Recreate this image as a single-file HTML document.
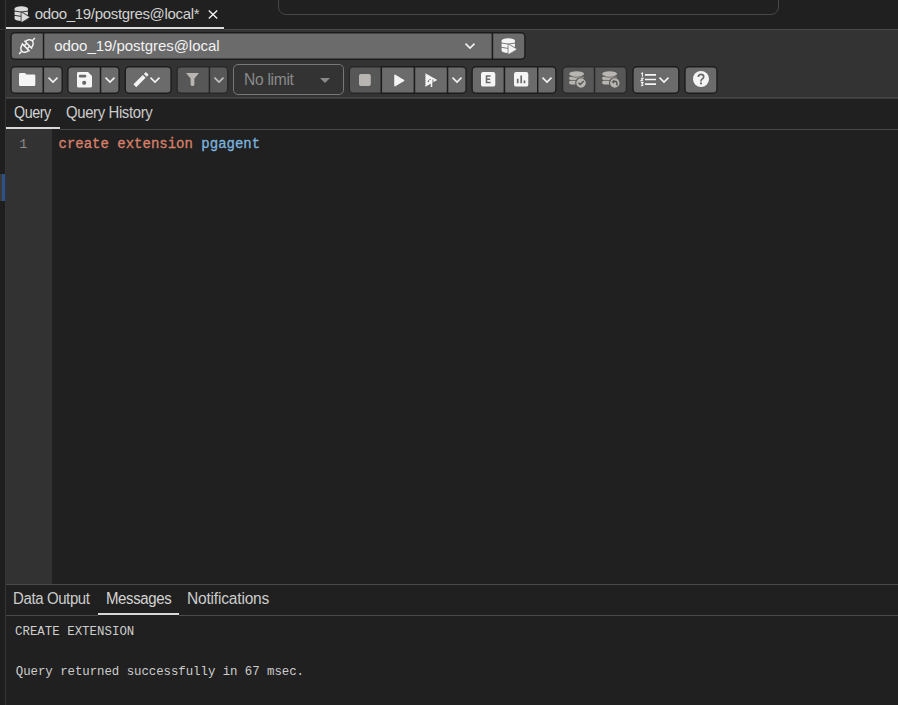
<!DOCTYPE html>
<html><head><meta charset="utf-8">
<style>
*{box-sizing:border-box;margin:0;padding:0}
html,body{width:898px;height:705px;overflow:hidden;background:#202020;font-family:"Liberation Sans",sans-serif;color:#d4d4d4}
.a{position:absolute}
.t{position:absolute;white-space:pre;line-height:1}
svg{position:absolute;overflow:visible}
</style></head><body>
<div class="a" style="left:0px;top:0px;width:5px;height:705px;background:#1e1e1e;"></div>
<div class="a" style="left:5px;top:0px;width:1px;height:705px;background:#353535;"></div>
<div class="a" style="left:0px;top:29px;width:5px;height:1px;background:#353535;"></div>
<div class="a" style="left:0px;top:174px;width:2px;height:27px;background:#3a3a3a;"></div>
<div class="a" style="left:2px;top:174px;width:3px;height:27px;background:#2b5288;"></div>
<div class="a" style="left:6px;top:0px;width:892px;height:29px;background:#202020;"></div>
<div class="a" style="left:278px;top:-12px;width:501px;height:27px;border:1px solid #474747;border-radius:8px"></div>
<svg style="left:14px;top:6px" width="16" height="16" viewBox="0 0 16 16"><path d="M0.6 2.7V12.6A6.65 2.3 0 0 0 13.9 12.6V2.7Z" fill="#dcdcdc"/><ellipse cx="7.25" cy="2.7" rx="6.65" ry="2.5" fill="#dcdcdc"/><path d="M0.2 5.0Q7.25 7.2 14.3 5.0M0.2 9.3Q7.25 11.5 14.3 9.3" fill="none" stroke="#202020" stroke-width="0.9"/><path d="M7.6 6.4L15.4 11.15L7.6 15.9Z" fill="#202020" stroke="#202020" stroke-width="1.8" stroke-linejoin="round"/><path d="M7.6 6.4L15.4 11.15L7.6 15.9Z" fill="#dcdcdc" stroke="#dcdcdc" stroke-width="0.3" stroke-linejoin="round"/></svg>
<div class="t" id="tabtxt" style="left:34.7px;top:6px;font-family:'Liberation Sans';font-size:15.0px;letter-spacing:-0.323px;color:#d2d2d2;">odoo_19/postgres@local*</div>
<svg style="left:208px;top:10px" width="10" height="9" viewBox="0 0 10 9"><path d="M0.8 0.5L9.2 8.5M9.2 0.5L0.8 8.5" stroke="#f0f0f0" stroke-width="1.4"/></svg>
<div class="a" style="left:6px;top:27px;width:218px;height:2px;background:#dcdcdc;"></div>
<div class="a" style="left:224px;top:29px;width:674px;height:1px;background:#4a4a4a;"></div>
<div class="a" style="left:6px;top:29px;width:218px;height:1px;background:#2e2e2e;"></div>
<div class="a" style="left:6px;top:30px;width:892px;height:67px;background:#333333;"></div>
<div class="a" style="left:6px;top:97px;width:892px;height:1px;background:#474747;"></div>
<div class="a" style="left:6px;top:98px;width:892px;height:1px;background:#3a3a3a;"></div>
<svg style="left:0;top:0" width="898" height="705" viewBox="0 0 898 705"><path d="M15.00 32.70H43.60V59.30H15.00A4 4 0 0 1 11.00 55.30V36.70A4 4 0 0 1 15.00 32.70Z" fill="#6b6b6b" stroke="#1c1c1c" stroke-width="1.4"/><path d="M43.60 32.70H492.50V59.30H43.60V32.70Z" fill="#6b6b6b" stroke="#1c1c1c" stroke-width="1.4"/><path d="M492.50 32.70H520.90A4 4 0 0 1 524.90 36.70V55.30A4 4 0 0 1 520.90 59.30H492.50V32.70Z" fill="#6b6b6b" stroke="#1c1c1c" stroke-width="1.4"/></svg>
<div class="t" id="conntxt" style="left:54.2px;top:38px;font-family:'Liberation Sans';font-size:15.0px;letter-spacing:-0.038px;color:#f2f2f2;">odoo_19/postgres@local</div>
<svg style="left:501px;top:38px" width="16" height="16" viewBox="0 0 16 16"><path d="M0.6 2.7V12.6A6.65 2.3 0 0 0 13.9 12.6V2.7Z" fill="#f5f5f5"/><ellipse cx="7.25" cy="2.7" rx="6.65" ry="2.5" fill="#f5f5f5"/><path d="M0.2 5.0Q7.25 7.2 14.3 5.0M0.2 9.3Q7.25 11.5 14.3 9.3" fill="none" stroke="#6b6b6b" stroke-width="0.9"/><path d="M7.6 6.4L15.4 11.15L7.6 15.9Z" fill="#6b6b6b" stroke="#6b6b6b" stroke-width="1.8" stroke-linejoin="round"/><path d="M7.6 6.4L15.4 11.15L7.6 15.9Z" fill="#f5f5f5" stroke="#f5f5f5" stroke-width="0.3" stroke-linejoin="round"/></svg>
<svg style="left:465px;top:42.5px" width="10" height="6" viewBox="0 0 10 6"><path d="M0.5 0.6L5 5.1L9.5 0.6" fill="none" stroke="#f5f5f5" stroke-width="1.5"/></svg>
<svg style="left:18.7px;top:38.05px" width="16" height="16" viewBox="0 0 16 16"><g transform="rotate(-45 8 8) translate(8 8)" fill="none" stroke="#f5f5f5" stroke-width="1.45"><path d="M1.8 -5.5V5.5M-1.8 -5.5V5.5M-1.8 -2H1.8M-1.8 2H1.8"/><path d="M1.8 -4.3A5.5 4.3 0 0 1 1.8 4.3M-1.8 -4.3A5.5 4.3 0 0 0 -1.8 4.3"/><path d="M7.2 0H11.2M-7.2 0H-11.2"/></g></svg>
<svg style="left:0;top:0" width="898" height="705" viewBox="0 0 898 705"><path d="M15.00 66.70H43.40V93.30H15.00A4 4 0 0 1 11.00 89.30V70.70A4 4 0 0 1 15.00 66.70Z" fill="#6b6b6b" stroke="#1c1c1c" stroke-width="1.4"/><path d="M43.40 66.70H58.20A4 4 0 0 1 62.20 70.70V89.30A4 4 0 0 1 58.20 93.30H43.40V66.70Z" fill="#6b6b6b" stroke="#1c1c1c" stroke-width="1.4"/></svg>
<svg style="left:0;top:0" width="898" height="705" viewBox="0 0 898 705"><path d="M71.80 66.70H100.60V93.30H71.80A4 4 0 0 1 67.80 89.30V70.70A4 4 0 0 1 71.80 66.70Z" fill="#6b6b6b" stroke="#1c1c1c" stroke-width="1.4"/><path d="M100.60 66.70H115.10A4 4 0 0 1 119.10 70.70V89.30A4 4 0 0 1 115.10 93.30H100.60V66.70Z" fill="#6b6b6b" stroke="#1c1c1c" stroke-width="1.4"/></svg>
<svg style="left:0;top:0" width="898" height="705" viewBox="0 0 898 705"><path d="M129.30 66.70H167.10A4 4 0 0 1 171.10 70.70V89.30A4 4 0 0 1 167.10 93.30H129.30A4 4 0 0 1 125.30 89.30V70.70A4 4 0 0 1 129.30 66.70Z" fill="#6b6b6b" stroke="#1c1c1c" stroke-width="1.4"/></svg>
<svg style="left:0;top:0" width="898" height="705" viewBox="0 0 898 705"><path d="M181.10 66.70H209.50V93.30H181.10A4 4 0 0 1 177.10 89.30V70.70A4 4 0 0 1 181.10 66.70Z" fill="#575757" stroke="#282828" stroke-width="1.4"/><path d="M209.50 66.70H223.70A4 4 0 0 1 227.70 70.70V89.30A4 4 0 0 1 223.70 93.30H209.50V66.70Z" fill="#575757" stroke="#282828" stroke-width="1.4"/></svg>
<svg style="left:233px;top:64px" width="111" height="31" viewBox="0 0 111 31"><rect x="0.5" y="0.5" width="110" height="30" rx="4.5" fill="none" stroke="#777" stroke-width="1"/></svg>
<div class="t" id="nolimit" style="left:244.0px;top:70.5px;font-family:'Liberation Sans';font-size:16.2px;letter-spacing:-0.3px;color:#8a8a8a;transform:scaleX(0.963);transform-origin:0 0;">No limit</div>
<svg style="left:320px;top:78px" width="10" height="5" viewBox="0 0 10 5"><path d="M0 0H10L5 5Z" fill="#8a8a8a"/></svg>
<svg style="left:0;top:0" width="898" height="705" viewBox="0 0 898 705"><path d="M353.30 66.70H381.40V93.30H353.30A4 4 0 0 1 349.30 89.30V70.70A4 4 0 0 1 353.30 66.70Z" fill="#575757" stroke="#282828" stroke-width="1.4"/><path d="M381.40 66.70H414.50V93.30H381.40V66.70Z" fill="#6b6b6b" stroke="#1c1c1c" stroke-width="1.4"/><path d="M414.50 66.70H447.60V93.30H414.50V66.70Z" fill="#6b6b6b" stroke="#1c1c1c" stroke-width="1.4"/><path d="M447.60 66.70H462.10A4 4 0 0 1 466.10 70.70V89.30A4 4 0 0 1 462.10 93.30H447.60V66.70Z" fill="#6b6b6b" stroke="#1c1c1c" stroke-width="1.4"/></svg>
<svg style="left:0;top:0" width="898" height="705" viewBox="0 0 898 705"><path d="M476.10 66.70H504.50V93.30H476.10A4 4 0 0 1 472.10 89.30V70.70A4 4 0 0 1 476.10 66.70Z" fill="#6b6b6b" stroke="#1c1c1c" stroke-width="1.4"/><path d="M504.50 66.70H537.70V93.30H504.50V66.70Z" fill="#6b6b6b" stroke="#1c1c1c" stroke-width="1.4"/><path d="M537.70 66.70H551.90A4 4 0 0 1 555.90 70.70V89.30A4 4 0 0 1 551.90 93.30H537.70V66.70Z" fill="#6b6b6b" stroke="#1c1c1c" stroke-width="1.4"/></svg>
<svg style="left:0;top:0" width="898" height="705" viewBox="0 0 898 705"><path d="M566.60 66.70H594.60V93.30H566.60A4 4 0 0 1 562.60 89.30V70.70A4 4 0 0 1 566.60 66.70Z" fill="#575757" stroke="#282828" stroke-width="1.4"/><path d="M594.60 66.70H622.50A4 4 0 0 1 626.50 70.70V89.30A4 4 0 0 1 622.50 93.30H594.60V66.70Z" fill="#575757" stroke="#282828" stroke-width="1.4"/></svg>
<svg style="left:0;top:0" width="898" height="705" viewBox="0 0 898 705"><path d="M637.00 66.70H674.80A4 4 0 0 1 678.80 70.70V89.30A4 4 0 0 1 674.80 93.30H637.00A4 4 0 0 1 633.00 89.30V70.70A4 4 0 0 1 637.00 66.70Z" fill="#6b6b6b" stroke="#1c1c1c" stroke-width="1.4"/></svg>
<svg style="left:0;top:0" width="898" height="705" viewBox="0 0 898 705"><path d="M689.00 66.70H713.00A4 4 0 0 1 717.00 70.70V89.30A4 4 0 0 1 713.00 93.30H689.00A4 4 0 0 1 685.00 89.30V70.70A4 4 0 0 1 689.00 66.70Z" fill="#6b6b6b" stroke="#1c1c1c" stroke-width="1.4"/></svg>
<svg style="left:18.7px;top:73px" width="16.3" height="13" viewBox="0 0 16.3 13"><path d="M0 1.2Q0 0 1.2 0H6L7.5 1.5H15.1Q16.3 1.5 16.3 2.7V11.8Q16.3 13 15.1 13H1.2Q0 13 0 11.8Z" fill="#f5f5f5"/></svg>
<svg style="left:48px;top:76.7px" width="10" height="6" viewBox="0 0 10 6"><path d="M0.5 0.6L5 5.1L9.5 0.6" fill="none" stroke="#f5f5f5" stroke-width="1.5"/></svg>
<svg style="left:76.7px;top:71.8px" width="15" height="15.4" viewBox="0 0 15 15.4"><path d="M0 1.5Q0 0 1.5 0H11L15 4V13.9Q15 15.4 13.5 15.4H1.5Q0 15.4 0 13.9Z" fill="#f5f5f5"/><rect x="1.9" y="2.8" width="7.4" height="2.6" rx="1.2" fill="#6b6b6b"/><circle cx="7.2" cy="10.8" r="2.1" fill="#6b6b6b"/></svg>
<svg style="left:105.3px;top:76.6px" width="10" height="6" viewBox="0 0 10 6"><path d="M0.5 0.6L5 5.1L9.5 0.6" fill="none" stroke="#f5f5f5" stroke-width="1.5"/></svg>
<svg style="left:130px;top:68px" width="22" height="22" viewBox="0 0 22 22"><path d="M4.85 17.75L14.2 8.4" stroke="#f5f5f5" stroke-width="3.9"/><path d="M15.3 7.3L17.25 5.35" stroke="#f5f5f5" stroke-width="3.9"/></svg>
<svg style="left:150.3px;top:76.8px" width="10" height="6" viewBox="0 0 10 6"><path d="M0.5 0.6L5 5.1L9.5 0.6" fill="none" stroke="#f5f5f5" stroke-width="1.5"/></svg>
<svg style="left:186.4px;top:73px" width="13" height="13" viewBox="0 0 13 13"><path d="M0.2 0H12.8Q12.9 0.3 12.6 0.6L8.4 5.6V11.2Q8.4 13.1 6.5 13.1Q4.6 13.1 4.6 11.2V5.6L0.4 0.6Q0.1 0.3 0.2 0Z" fill="#b9b6b1"/></svg>
<svg style="left:214px;top:76.5px" width="10" height="6" viewBox="0 0 10 6"><path d="M0.5 0.6L5 5.1L9.5 0.6" fill="none" stroke="#c4c4c4" stroke-width="1.5"/></svg>
<svg style="left:359px;top:74px" width="12" height="12.2" viewBox="0 0 12 12.2"><rect x="0" y="0" width="11.8" height="12.1" rx="2" fill="#b9b6b1"/></svg>
<svg style="left:393.5px;top:73.5px" width="11" height="13" viewBox="0 0 11 13"><path d="M0.8 0.9L10.2 6.5L0.8 12.1Z" fill="#f5f5f5" stroke="#f5f5f5" stroke-width="1" stroke-linejoin="round"/></svg>
<svg style="left:425px;top:72.5px" width="13" height="14" viewBox="0 0 13 14"><path d="M0.3 0.2L12.3 7.1L0.3 13.8Z" fill="#f5f5f5"/><path d="M3.0 9.2Q3.4 7.2 5.6 6.2M7.9 6.4V14" fill="none" stroke="#6b6b6b" stroke-width="1.1"/><path d="M4.3 8.3L6.5 7.0V14" fill="none" stroke="#f5f5f5" stroke-width="1.5"/><path d="M0 1.5H0.7M0 3.5H0.7M0 5.5H0.7M0 7.5H0.7M0 9.5H0.7M0 11.5H0.7" stroke="#6b6b6b" stroke-width="0.6"/></svg>
<svg style="left:452px;top:76.7px" width="10" height="6" viewBox="0 0 10 6"><path d="M0.5 0.6L5 5.1L9.5 0.6" fill="none" stroke="#f5f5f5" stroke-width="1.5"/></svg>
<svg style="left:480.9px;top:72.1px" width="14.3" height="14.6" viewBox="0 0 14.3 14.6"><rect width="14.3" height="14.6" rx="2.2" fill="#f5f5f5"/><path d="M9.6 4.1H5.5V10.5H9.6M5.5 7.3H9.2" fill="none" stroke="#6b6b6b" stroke-width="1.55"/></svg>
<svg style="left:513.8px;top:72.1px" width="14.3" height="14.6" viewBox="0 0 14.3 14.6"><rect width="14.3" height="14.6" rx="2.2" fill="#f5f5f5"/><path d="M3.7 6.8V11.2M7.2 3.4V11.2M10.5 8.4V11.2" fill="none" stroke="#6b6b6b" stroke-width="1.7"/></svg>
<svg style="left:542.1px;top:77px" width="10" height="6" viewBox="0 0 10 6"><path d="M0.5 0.6L5 5.1L9.5 0.6" fill="none" stroke="#f5f5f5" stroke-width="1.5"/></svg>
<svg style="left:569px;top:71px" width="18" height="18" viewBox="0 0 18 18"><rect x="0.1" y="9.5" width="12" height="4.0" rx="2" fill="#b9b6b1"/><rect x="0.1" y="5.3" width="14.8" height="4.0" rx="2" fill="#b9b6b1"/><path d="M0 9.4H15" stroke="#575757" stroke-width="0.6"/><path d="M0 5.3Q7.6 7.4 15.2 5.3" stroke="#575757" stroke-width="0.7" fill="none"/><ellipse cx="7.6" cy="2.9" rx="7.4" ry="2.6" fill="#b9b6b1"/><circle cx="12" cy="12" r="5.3" fill="#b9b6b1" stroke="#575757" stroke-width="1.1"/><path d="M9.4 11.7L11.3 13.6L14.7 10" fill="none" stroke="#575757" stroke-width="1.4"/></svg>
<svg style="left:601.6px;top:71px" width="18" height="18" viewBox="0 0 18 18"><rect x="0.1" y="9.5" width="12" height="4.0" rx="2" fill="#b9b6b1"/><rect x="0.1" y="5.3" width="14.8" height="4.0" rx="2" fill="#b9b6b1"/><path d="M0 9.4H15" stroke="#575757" stroke-width="0.6"/><path d="M0 5.3Q7.6 7.4 15.2 5.3" stroke="#575757" stroke-width="0.7" fill="none"/><ellipse cx="7.6" cy="2.9" rx="7.4" ry="2.6" fill="#b9b6b1"/><circle cx="12.8" cy="12" r="5.3" fill="#b9b6b1" stroke="#575757" stroke-width="1.1"/><path d="M11.6 10.5Q14.4 9.8 14.9 12Q15.2 13.3 14.6 14.4" fill="none" stroke="#575757" stroke-width="1.5"/><path d="M9.4 10.9L12.2 8.8L12.3 12.7Z" fill="#575757"/></svg>
<svg style="left:640px;top:72px" width="18" height="14" viewBox="0 0 18 14"><path d="M4.9 2.95H16M4.9 7.5H16M4.9 12.15H16" stroke="#f5f5f5" stroke-width="1.7"/><path d="M1.1 1.7L2.4 0.9V4.7M0.9 6.2H3.1L1.0 8.8H3.2M0.9 10.6H3L2 11.9Q3.2 12.3 3 13.1Q2.6 13.9 0.9 13.8" fill="none" stroke="#f5f5f5" stroke-width="1.05"/></svg>
<svg style="left:658.6px;top:76.9px" width="10" height="6" viewBox="0 0 10 6"><path d="M0.5 0.6L5 5.1L9.5 0.6" fill="none" stroke="#f5f5f5" stroke-width="1.5"/></svg>
<svg style="left:693px;top:71.2px" width="16" height="16" viewBox="0 0 16 16"><circle cx="8" cy="8" r="8" fill="#f5f5f5"/><path d="M5.3 6.1Q5.3 3.4 8 3.4Q10.7 3.4 10.7 5.8Q10.7 7.2 9.2 7.9Q8 8.5 8 10V10.4" fill="none" stroke="#6b6b6b" stroke-width="1.7"/><circle cx="8" cy="12.4" r="1.05" fill="#6b6b6b"/></svg>
<div class="a" style="left:6px;top:99px;width:892px;height:30px;background:#202020;"></div>
<div class="t" id="qtab" style="left:13.8px;top:105px;font-family:'Liberation Sans';font-size:15.8px;letter-spacing:-0.5px;color:#d4d4d4;transform:scaleX(0.905);transform-origin:0 0;">Query</div>
<div class="t" id="qhtab" style="left:66.35px;top:105px;font-family:'Liberation Sans';font-size:15.8px;letter-spacing:-0.4px;color:#cccccc;transform:scaleX(0.945);transform-origin:0 0;">Query History</div>
<div class="a" style="left:6px;top:127px;width:54px;height:2px;background:#d8d8d8;"></div>
<div class="a" style="left:6px;top:129px;width:892px;height:455px;background:#202020;"></div>
<div class="a" style="left:6px;top:129px;width:46px;height:455px;background:#323232;"></div>
<div class="a" style="left:60px;top:129px;width:838px;height:1px;background:#4a4a4a;"></div>
<div class="t" id="ln1" style="left:19.3px;top:138px;font-family:'Liberation Mono';font-size:13.5px;letter-spacing:0px;color:#8a8a8a;">1</div>
<div class="t" id="code" style="left:58.5px;top:137px;font-family:'Liberation Mono';font-size:14px;color:#d9806a;-webkit-text-stroke:0.3px currentColor"><span>create extension </span><span style="color:#7cb4df">pgagent</span></div>
<div class="a" style="left:6px;top:584px;width:892px;height:1px;background:#4a4a4a;"></div>
<div class="t" id="dotab" style="left:13.35px;top:591px;font-family:'Liberation Sans';font-size:15.8px;letter-spacing:-0.4px;color:#cccccc;transform:scaleX(0.948);transform-origin:0 0;">Data Output</div>
<div class="t" id="msgtab" style="left:105.75px;top:591px;font-family:'Liberation Sans';font-size:15.8px;letter-spacing:-0.4px;color:#d4d4d4;transform:scaleX(0.95);transform-origin:0 0;">Messages</div>
<div class="t" id="nottab" style="left:187.42px;top:591px;font-family:'Liberation Sans';font-size:15.8px;letter-spacing:-0.2px;color:#cccccc;transform:scaleX(0.984);transform-origin:0 0;">Notifications</div>
<div class="a" style="left:98px;top:613px;width:81px;height:2px;background:#d8d8d8;"></div>
<div class="a" style="left:6px;top:615px;width:92px;height:1px;background:#4a4a4a;"></div>
<div class="a" style="left:179px;top:615px;width:719px;height:1px;background:#4a4a4a;"></div>
<div class="t" id="m1" style="left:15.0px;top:626px;font-family:'Liberation Mono';font-size:12.4px;letter-spacing:0.02px;color:#cdcdcd;">CREATE EXTENSION</div>
<div class="t" id="m2" style="left:15.8px;top:666px;font-family:'Liberation Mono';font-size:12.4px;letter-spacing:-0.047px;color:#cdcdcd;">Query returned successfully in 67 msec.</div>
</body></html>
